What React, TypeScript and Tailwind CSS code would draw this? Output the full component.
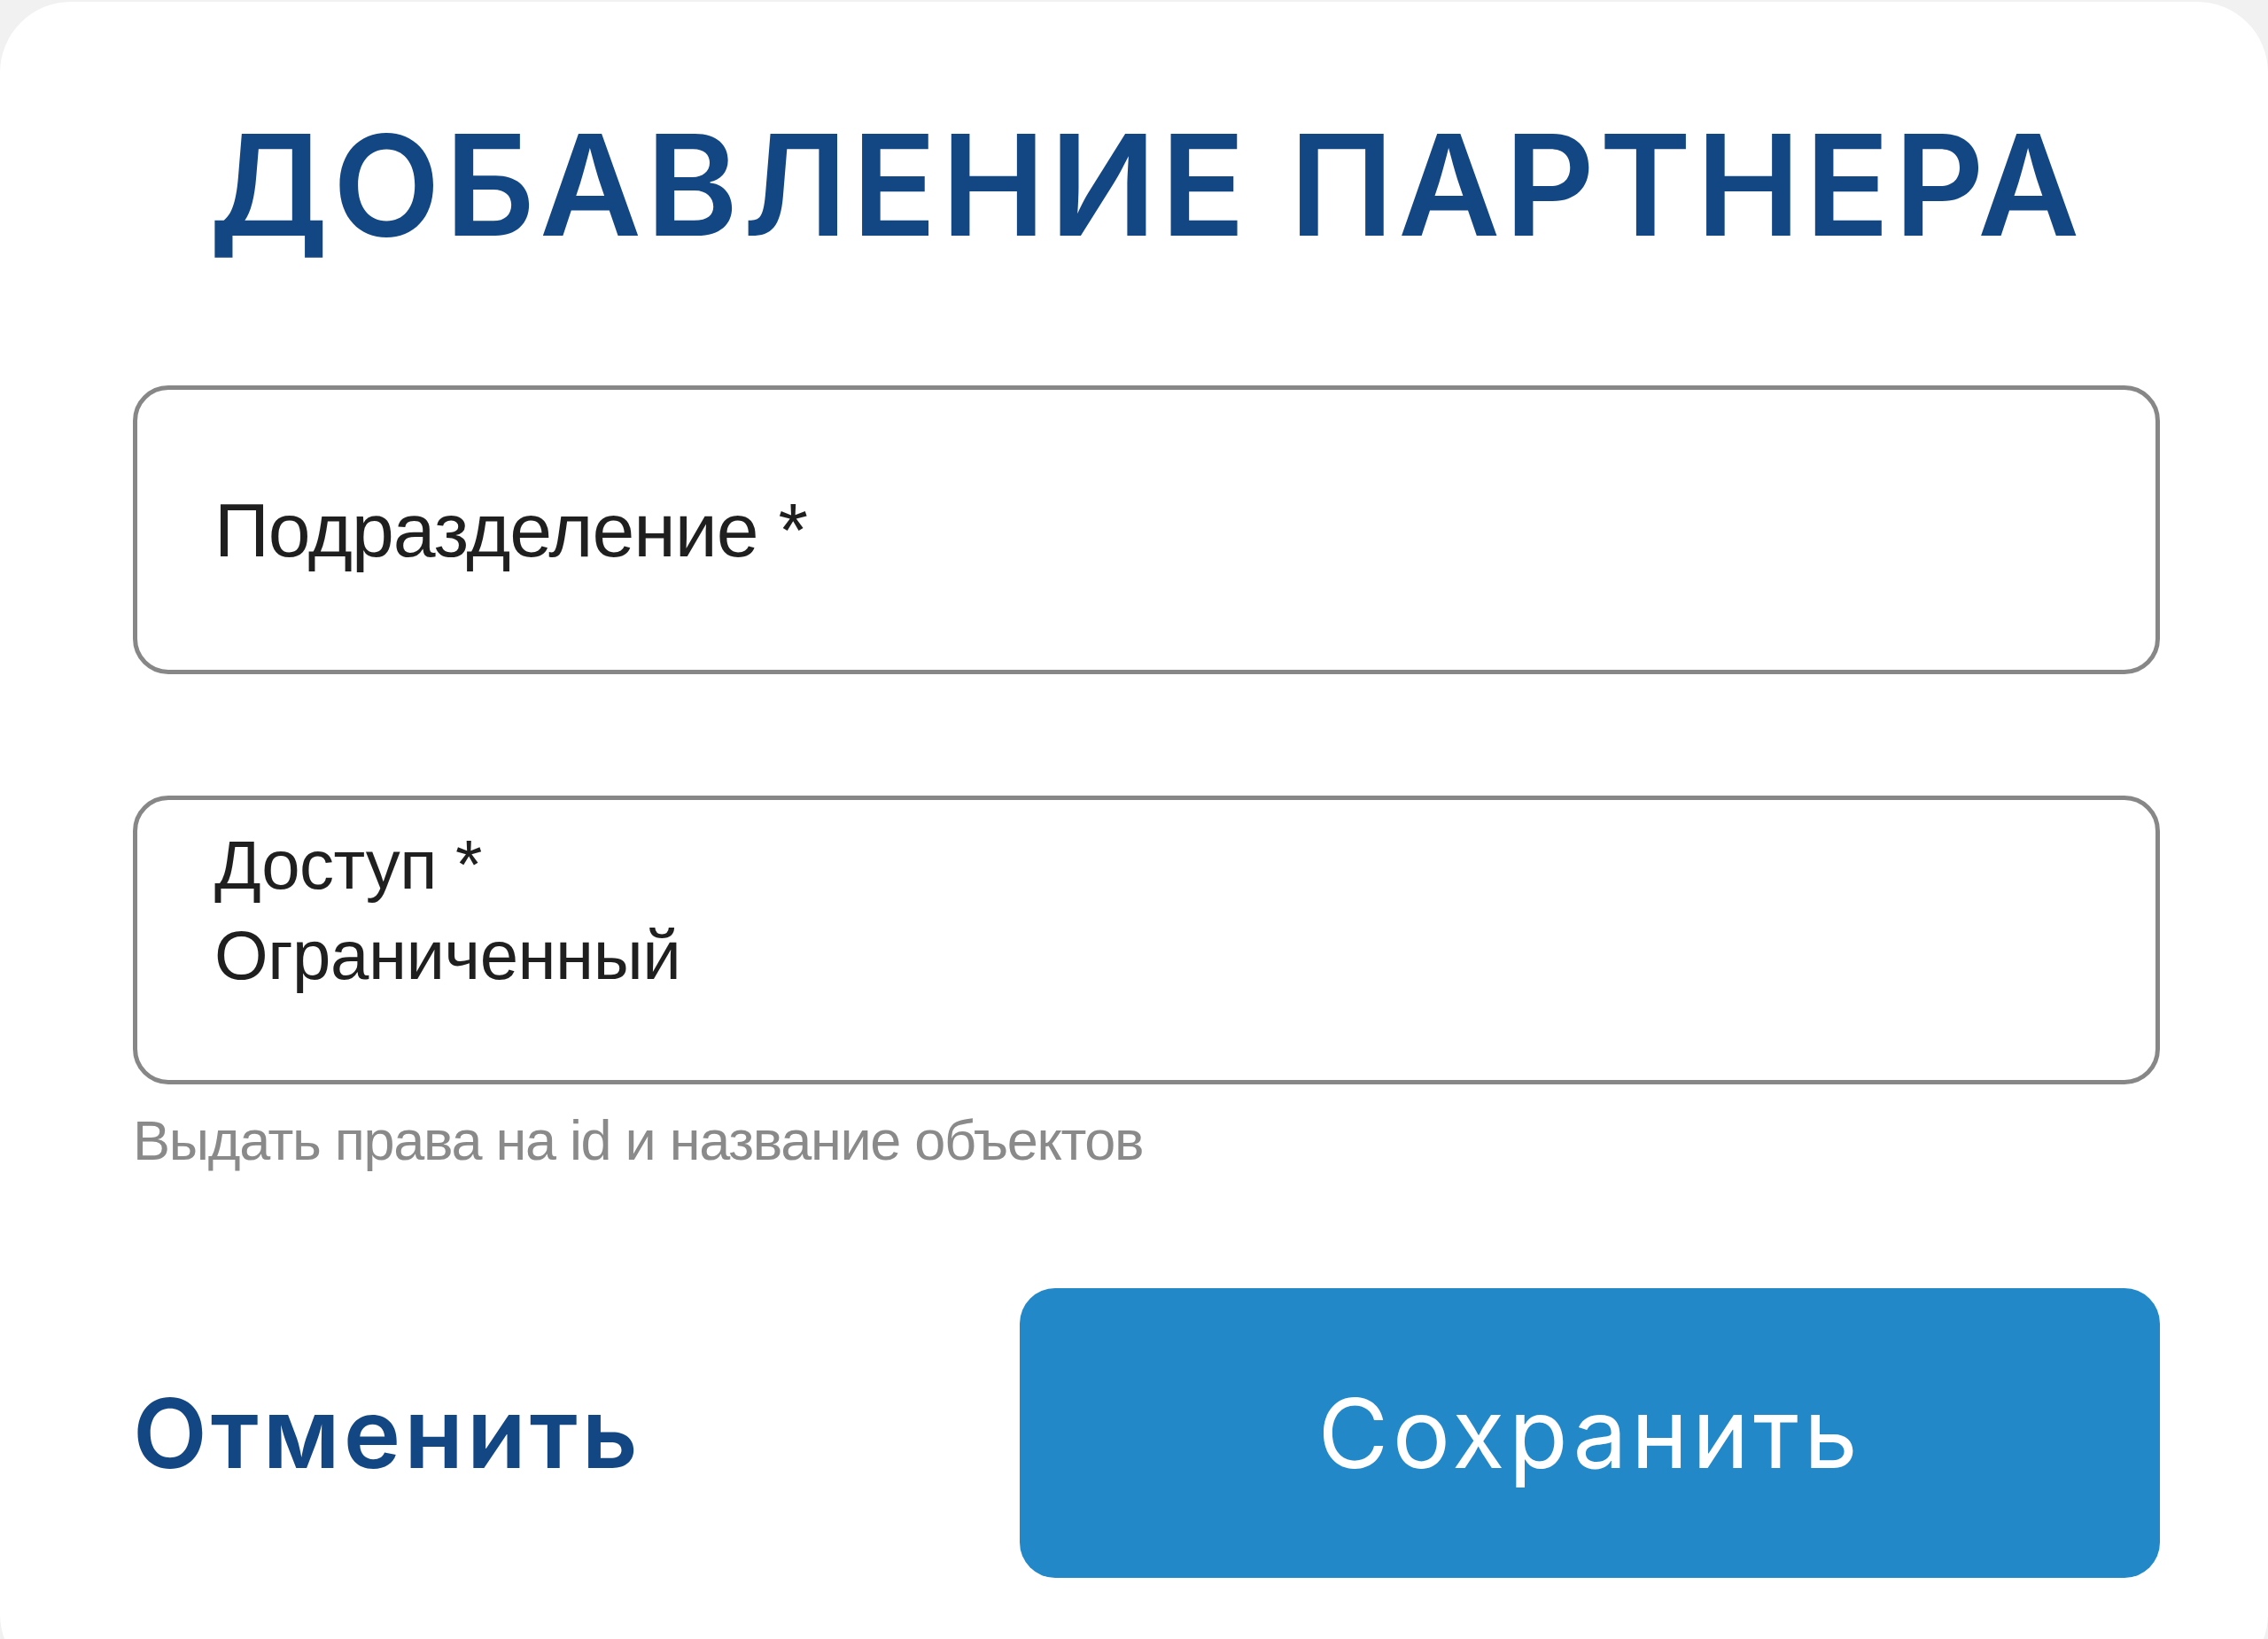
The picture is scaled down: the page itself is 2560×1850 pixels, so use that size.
import React from "react";

export default function App() {
  return (
    <div className="w-[2560px] h-[1850px] overflow-hidden bg-[#f1f1f1] pt-[2px]">
      <div className="h-[1900px] bg-white rounded-[80px] pl-[150px] pr-[122px] pt-[128px]">
        <h1
          className="text-center text-[158px] leading-none font-semibold text-[#134784] tracking-[5px]"
          style={{ fontFamily: "Inter, 'Noto Sans', sans-serif" }}
        >
          ДОБАВЛЕНИЕ ПАРТНЕРА
        </h1>

        <div
          className="mt-[147px] h-[326px] border-[5px] border-[#878787] rounded-[40px] pl-[87px] flex items-center"
          style={{ fontFamily: "'Liberation Sans', Arial, sans-serif" }}
        >
          <span className="text-[86px] leading-none text-[#1f1f1f] tracking-[-1px]">Подразделение *</span>
        </div>

        <div
          className="mt-[137px] h-[326px] border-[5px] border-[#878787] rounded-[40px] pl-[87px] pt-[22px] flex flex-col"
          style={{ fontFamily: "'Liberation Sans', Arial, sans-serif" }}
        >
          <span className="text-[78px] leading-[102px] text-[#1f1f1f] tracking-[-0.5px]">Доступ *</span>
          <span className="text-[78px] leading-[102px] text-[#1f1f1f] tracking-[-0.5px]">Ограниченный</span>
        </div>

        <p
          className="mt-[25px] text-[63px] leading-[76px] text-[#8a8a8a] tracking-[-1.3px]"
          style={{ fontFamily: "'Liberation Sans', Arial, sans-serif" }}
        >
          Выдать права на id и название объектов
        </p>

        <div className="mt-[129px] flex items-center justify-between" style={{ fontFamily: "Inter, 'Noto Sans', sans-serif" }}>
          <button className="text-[109px] leading-none font-semibold text-[#134784] tracking-[4px]">Отменить</button>
          <button className="w-[1287px] h-[327px] rounded-[40px] bg-[#2288c8] text-white text-[109px] leading-none font-normal tracking-[4.5px] flex items-center justify-center">
            Сохранить
          </button>
        </div>
      </div>
    </div>
  );
}
